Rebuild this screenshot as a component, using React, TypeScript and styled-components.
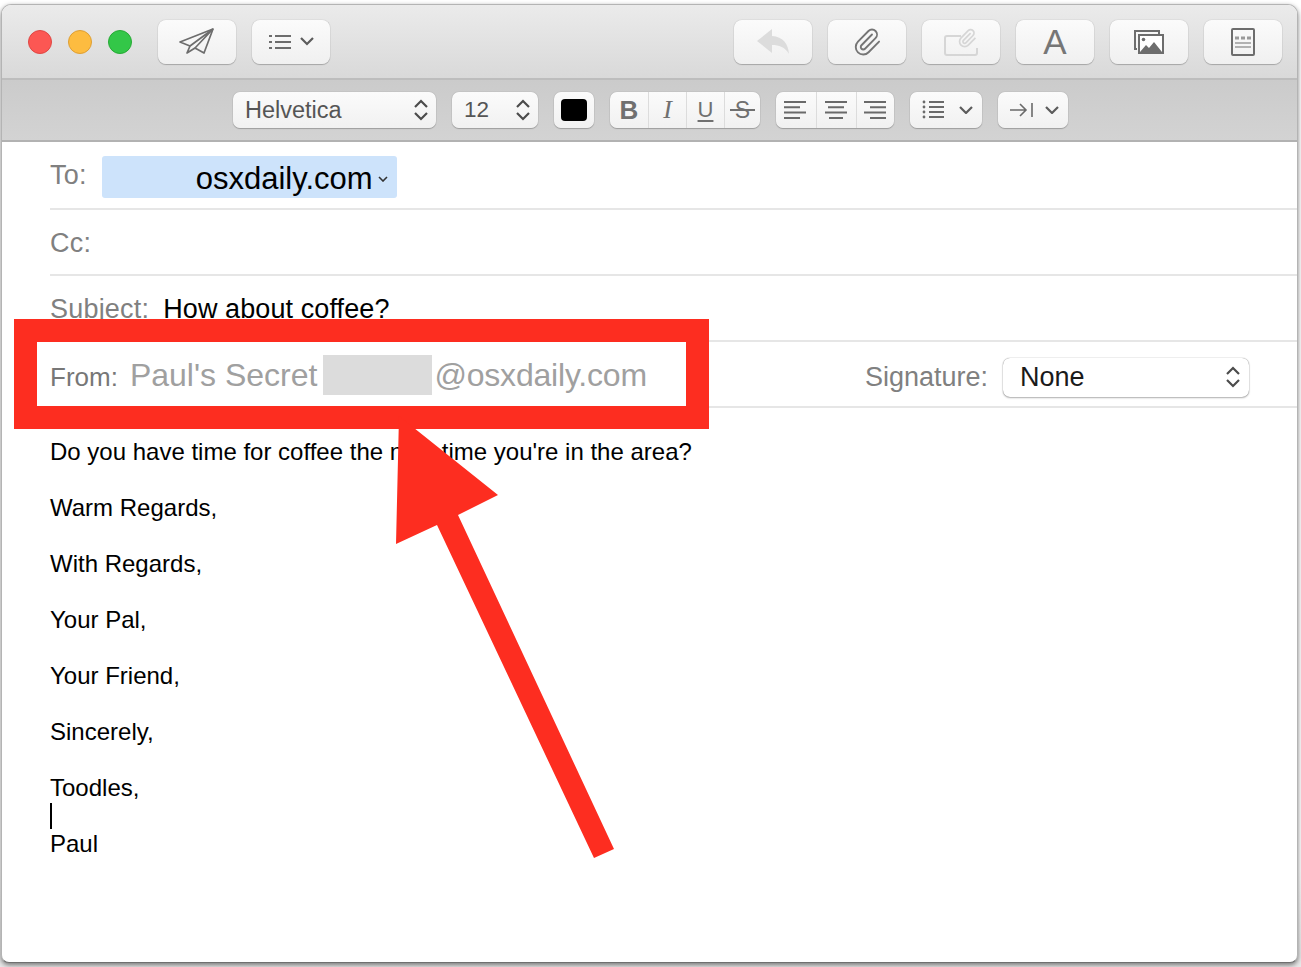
import React from "react";
import styled, { createGlobalStyle } from "styled-components";
import { Paperclip } from "lucide-react";

const GlobalStyle = createGlobalStyle`
  html, body {
    margin: 0;
    background: #fff;
  }
  body {
    font-family: "Liberation Sans", Arial, sans-serif;
  }
`;

const Chevron = ({ size = 14 }: { size?: number }) => (
  <svg width={size} height={size * 0.6} viewBox="0 0 14 8.4" fill="none" stroke="#5c5c5c" strokeWidth="2.2">
    <path d="M1 1l6 6 6-6" />
  </svg>
);

const Stepper = () => (
  <svg width="16" height="22" viewBox="0 0 16 22" fill="none" stroke="#4c4c4c" strokeWidth="2.2">
    <path d="M2 8l6-6 6 6M2 14l6 6 6-6" />
  </svg>
);

const Lines = ({ offsets }: { offsets: number[][] }) => (
  <svg width="24" height="22" viewBox="0 0 24 22" stroke="#6a6a6a" strokeWidth="2">
    {offsets.map(([x1, x2], i) => (
      <line key={i} x1={x1} x2={x2} y1={3 + i * 5.3} y2={3 + i * 5.3} />
    ))}
  </svg>
);

const App: React.FC = () => {
  return (
    <Page>
      <GlobalStyle />
      <Window>
        <TitleBar>
          <Light $color="#fc5753" $edge="#df4744" />
          <Light $color="#fdbc40" $edge="#de9f34" />
          <Light $color="#33c748" $edge="#27aa35" />
          <ToolButton $first>
            <svg width="36" height="28" viewBox="0 0 36 28" fill="none" stroke="#6d6d6d" strokeWidth="1.7" strokeLinejoin="round">
              <path d="M34 1L1 14l10 4-3 7 8-5 9 5z" />
              <path d="M34 1L11 18M34 1L16 20" />
            </svg>
          </ToolButton>
          <ToolButton>
            <svg width="24" height="16" viewBox="0 0 24 16" stroke="#6d6d6d" strokeWidth="2">
              <path d="M1 2h3M7 2h16M1 8h3M7 8h16M1 14h3M7 14h16" />
            </svg>
            <Chevron />
          </ToolButton>
          <Spacer />
          <ToolButton>
            <svg width="32" height="25" viewBox="0 0 32 25" fill="#dcdcdc">
              <path d="M0 12L15 0v7c11 1 16 7 17 18-4-7-10-9-17-9v8z" />
            </svg>
          </ToolButton>
          <ToolButton>
            <Paperclip size={30} color="#757575" strokeWidth={1.5} />
          </ToolButton>
          <ToolButton>
            <svg width="34" height="28" viewBox="0 0 34 28" fill="none" stroke="#d6d6d6" strokeWidth="2">
              <path d="M17 8H3a2 2 0 0 0-2 2v15a2 2 0 0 0 2 2h28a2 2 0 0 0 2-2v-5" />
              <g transform="translate(13 0) scale(.85)">
                <path d="m16 6-8.414 8.586a2 2 0 0 0 2.829 2.829l8.414-8.586a4 4 0 1 0-5.657-5.657l-8.379 8.551a6 6 0 1 0 8.485 8.485l8.379-8.551" />
              </g>
            </svg>
          </ToolButton>
          <ToolButton>
            <FontGlyph>A</FontGlyph>
          </ToolButton>
          <ToolButton>
            <svg width="30" height="25" viewBox="0 0 30 25">
              <path d="M3 20H1V2h24v3" fill="none" stroke="#6d6d6d" strokeWidth="2" />
              <rect x="5" y="6" width="24" height="18" fill="#fff" stroke="#6d6d6d" strokeWidth="2" />
              <circle cx="9.5" cy="10.5" r="1.8" fill="#6d6d6d" />
              <path d="M6 23l6-7 3 3 5-6 8 10z" fill="#6d6d6d" />
            </svg>
          </ToolButton>
          <ToolButton>
            <svg width="24" height="28" viewBox="0 0 24 28" fill="none">
              <rect x="1" y="1" width="22" height="26" rx="1" stroke="#6d6d6d" strokeWidth="2" />
              <path d="M4 10h4M10 10h4M16 10h4" stroke="#9a9a9a" strokeWidth="3" />
              <path d="M4 15h16M4 19h16" stroke="#9a9a9a" strokeWidth="1.4" />
            </svg>
          </ToolButton>
        </TitleBar>

        <FormatBar>
          <SelectButton $width={203} $fontSize={23.5}>
            Helvetica
            <Stepper />
          </SelectButton>
          <SelectButton $width={86} $fontSize={22.5}>
            12
            <Stepper />
          </SelectButton>
          <ColorWell>
            <Swatch />
          </ColorWell>
          <SegmentGroup>
            <Segment $width={38}><BoldMark>B</BoldMark></Segment>
            <Segment $width={38}><ItalicMark>I</ItalicMark></Segment>
            <Segment $width={38}><UnderlineMark>U</UnderlineMark></Segment>
            <Segment $width={36}><StrikeMark>S</StrikeMark></Segment>
          </SegmentGroup>
          <SegmentGroup>
            <Segment $width={40}><Lines offsets={[[0, 22], [0, 16], [0, 22], [0, 16]]} /></Segment>
            <Segment $width={40}><Lines offsets={[[0, 22], [3, 19], [0, 22], [4, 18]]} /></Segment>
            <Segment $width={38}><Lines offsets={[[0, 22], [6, 22], [0, 22], [6, 22]]} /></Segment>
          </SegmentGroup>
          <IconSelect $width={72} $fontSize={23}>
            <svg width="24" height="22" viewBox="0 0 24 22" fill="#6a6a6a">
              <circle cx="2" cy="3" r="1.4" /><circle cx="2" cy="8" r="1.4" /><circle cx="2" cy="13" r="1.4" /><circle cx="2" cy="18" r="1.4" />
              <path d="M7 2h15v2H7zM7 7h15v2H7zM7 12h15v2H7zM7 17h15v2H7z" />
            </svg>
            <Chevron />
          </IconSelect>
          <IconSelect $width={70} $fontSize={23}>
            <svg width="24" height="16" viewBox="0 0 24 16" fill="none" stroke="#6a6a6a" strokeWidth="1.6">
              <path d="M0 8h16M10 2l6 6-6 6M22 1v14" />
            </svg>
            <Chevron />
          </IconSelect>
        </FormatBar>

        <HeaderRow $height={68}>
          <FieldLabel>To:</FieldLabel>
          <AddressChip>
            osxdaily.com
            <svg width="10" height="6" viewBox="0 0 10 6" fill="none" stroke="#333" strokeWidth="1.6">
              <path d="M1 1l4 4 4-4" />
            </svg>
          </AddressChip>
        </HeaderRow>
        <HeaderRow $height={66} $paddingTop={2}>
          <FieldLabel>Cc:</FieldLabel>
        </HeaderRow>
        <HeaderRow $height={66} $paddingTop={2}>
          <FieldLabel>Subject:</FieldLabel>
          <SubjectText>How about coffee?</SubjectText>
        </HeaderRow>
        <HeaderRow $height={66}>
          <FromLabel>From:</FromLabel>
          <FromAddress $tracking={0}>Paul's Secret</FromAddress>
          <Redaction />
          <FromAddress $tracking={-0.2}>@osxdaily.com</FromAddress>
          <Spacer />
          <SignatureLabel>Signature:</SignatureLabel>
          <SignatureSelect>
            None
            <Stepper />
          </SignatureSelect>
        </HeaderRow>

        <MessageBody>
          <Line>Do you have time for coffee the next time you're in the area?</Line>
          <Line>Warm Regards,</Line>
          <Line>With Regards,</Line>
          <Line>Your Pal,</Line>
          <Line>Your Friend,</Line>
          <Line>Sincerely,</Line>
          <Line>Toodles,</Line>
          <Line>
            <Caret />
            Paul
          </Line>
        </MessageBody>
      </Window>

      <RedFrame />
      <ArrowDrawing width="240" height="460" viewBox="0 0 240 460">
        <path d="M9 6L108 85 68 105 224 439 204 448 47 115 6 134z" fill="#fd2d20" />
      </ArrowDrawing>
    </Page>
  );
};

export default App;

// Styled components
const Page = styled.div`
  position: relative;
  width: 1301px;
  height: 967px;
  overflow: hidden;
  padding: 4px 3px 4px 1px;
  box-sizing: border-box;
  background: linear-gradient(180deg, #fff 0%, #fff 90%, #e8e8e8 100%);
`;

const Window = styled.div`
  height: 100%;
  box-sizing: border-box;
  background: #fff;
  border: 1px solid #b4b4b4;
  border-bottom-color: #6f6f6f;
  border-radius: 10px 10px 8px 8px;
  box-shadow: 0 2px 5px rgba(0, 0, 0, 0.5);
  overflow: hidden;
`;

const TitleBar = styled.div`
  display: flex;
  align-items: center;
  gap: 16px;
  height: 75px;
  padding: 0 15px 0 26px;
  box-sizing: border-box;
  background: linear-gradient(180deg, #ebebeb, #d9d9d9);
  border-bottom: 2px solid #bdbdbd;
`;

const Light = styled.span<{ $color: string; $edge: string }>`
  width: 24px;
  height: 24px;
  box-sizing: border-box;
  border-radius: 50%;
  background: ${(p) => p.$color};
  border: 1px solid ${(p) => p.$edge};
`;

const ToolButton = styled.button<{ $first?: boolean }>`
  display: flex;
  align-items: center;
  justify-content: center;
  gap: 8px;
  width: 78px;
  height: 44px;
  padding: 0;
  margin-left: ${(p) => (p.$first ? "10px" : "0")};
  background: linear-gradient(180deg, #fbfbfb, #f0f0f0);
  border: 0;
  border-radius: 8px;
  box-shadow: 0 0 1px rgba(0, 0, 0, 0.35), 0 1px 1px rgba(0, 0, 0, 0.22);
`;

const Spacer = styled.div`
  flex: 1;
`;

const FontGlyph = styled.span`
  font-size: 35px;
  color: #767676;
  line-height: 1;
`;

const FormatBar = styled.div`
  display: flex;
  align-items: center;
  gap: 16px;
  height: 62px;
  padding-left: 231px;
  box-sizing: border-box;
  background: linear-gradient(180deg, #cbcbcb, #d3d3d3);
  border-bottom: 2px solid #b2b2b2;
`;

const SelectButton = styled.div<{ $width: number; $fontSize: number }>`
  display: flex;
  align-items: center;
  justify-content: space-between;
  width: ${(p) => p.$width}px;
  height: 36px;
  padding: 0 7px 0 12px;
  box-sizing: border-box;
  font-size: ${(p) => p.$fontSize}px;
  color: #555;
  background: linear-gradient(180deg, #fbfbfb, #f1f1f1);
  border-radius: 7px;
  box-shadow: 0 0 1px rgba(0, 0, 0, 0.35), 0 1px 1px rgba(0, 0, 0, 0.22);
`;

const IconSelect = styled(SelectButton)`
  padding: 0 9px 0 12px;
`;

const ColorWell = styled.div`
  display: flex;
  align-items: center;
  justify-content: center;
  width: 40px;
  height: 36px;
  background: linear-gradient(180deg, #fbfbfb, #f1f1f1);
  border-radius: 7px;
  box-shadow: 0 0 1px rgba(0, 0, 0, 0.35), 0 1px 1px rgba(0, 0, 0, 0.22);
`;

const Swatch = styled.div`
  width: 26px;
  height: 22px;
  background: #000;
  border-radius: 4px;
`;

const SegmentGroup = styled.div`
  display: flex;
  height: 36px;
  background: linear-gradient(180deg, #fbfbfb, #f1f1f1);
  border-radius: 7px;
  box-shadow: 0 0 1px rgba(0, 0, 0, 0.35), 0 1px 1px rgba(0, 0, 0, 0.22);
`;

const Segment = styled.div<{ $width: number }>`
  display: flex;
  align-items: center;
  justify-content: center;
  width: ${(p) => p.$width}px;
  color: #707070;
  border-left: 1px solid #dcdcdc;
  box-sizing: border-box;

  &:first-child {
    border-left: 0;
  }
`;

const BoldMark = styled.span`
  font-size: 26px;
  font-weight: 700;
`;

const ItalicMark = styled.span`
  font-family: "Liberation Serif", serif;
  font-size: 26px;
  font-style: italic;
`;

const UnderlineMark = styled.span`
  font-size: 22px;
  text-decoration: underline;
  text-decoration-thickness: 2px;
  text-underline-offset: 3px;
`;

const StrikeMark = styled.span`
  position: relative;
  font-size: 23px;

  &::after {
    content: "";
    position: absolute;
    left: -5px;
    right: -5px;
    top: 12px;
    height: 2px;
    background: #707070;
  }
`;

const HeaderRow = styled.div<{ $height: number; $paddingTop?: number }>`
  display: flex;
  align-items: center;
  height: ${(p) => p.$height}px;
  margin-left: 48px;
  padding-top: ${(p) => p.$paddingTop ?? 0}px;
  padding-right: 48px;
  box-sizing: border-box;
  border-bottom: 2px solid #e6e6e6;
`;

const FieldLabel = styled.span`
  font-size: 27px;
  letter-spacing: 0.2px;
  color: #808080;
`;

const AddressChip = styled.div`
  display: flex;
  align-items: center;
  justify-content: flex-end;
  gap: 5px;
  width: 295px;
  height: 42px;
  margin: 4px 0 0 15px;
  padding: 3px 9px 0 0;
  box-sizing: border-box;
  font-size: 31px;
  color: #000;
  background: #cde3fb;
  border-radius: 3px;
`;

const SubjectText = styled.span`
  margin-left: 14px;
  font-size: 27px;
  letter-spacing: 0.1px;
  color: #000;
`;

const FromLabel = styled.span`
  margin: 6px 12px 0 0;
  font-size: 26px;
  color: #777;
`;

const FromAddress = styled.span<{ $tracking: number }>`
  margin-top: 2px;
  font-size: 32px;
  letter-spacing: ${(p) => p.$tracking}px;
  color: #a0a0a0;
`;

const Redaction = styled.div`
  width: 109px;
  height: 40px;
  margin: 2px 2px 0 6px;
  background: #dcdcdc;
`;

const SignatureLabel = styled.span`
  margin: 6px 15px 0 0;
  font-size: 27px;
  color: #808080;
`;

const SignatureSelect = styled.div`
  display: flex;
  align-items: center;
  justify-content: space-between;
  width: 246px;
  height: 39px;
  margin-top: 6px;
  padding: 0 8px 0 17px;
  box-sizing: border-box;
  font-size: 27px;
  color: #1a1a1a;
  background: #fff;
  border-radius: 7px;
  box-shadow: 0 0 1px rgba(0, 0, 0, 0.55), 0 1px 2px rgba(0, 0, 0, 0.28);
`;

const MessageBody = styled.div`
  padding: 16px 0 0 48px;
`;

const Line = styled.div`
  position: relative;
  height: 56px;
  line-height: 56px;
  font-size: 24px;
  color: #000;
`;

const Caret = styled.span`
  position: absolute;
  left: 0;
  top: -13px;
  width: 2px;
  height: 26px;
  background: #000;
`;

const RedFrame = styled.div`
  position: absolute;
  left: 14px;
  top: 319px;
  width: 695px;
  height: 110px;
  box-sizing: border-box;
  border: 23px solid #fd2d20;
`;

const ArrowDrawing = styled.svg`
  position: absolute;
  left: 390px;
  top: 410px;
`;
